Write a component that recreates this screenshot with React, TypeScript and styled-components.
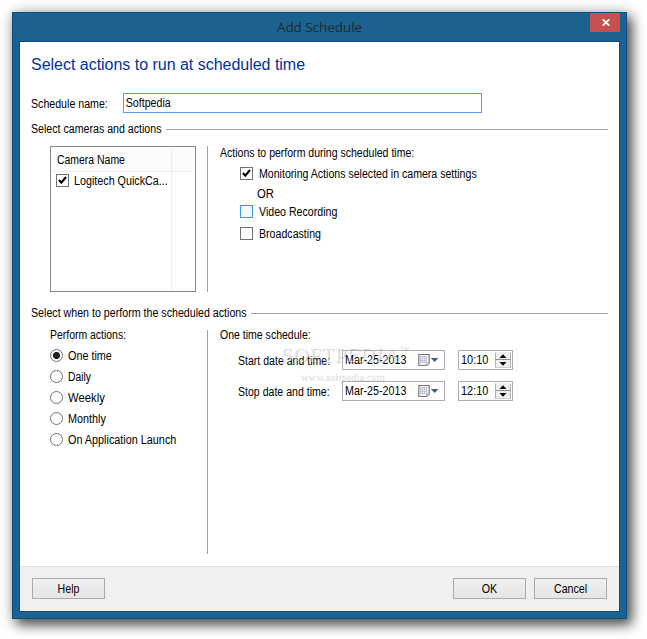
import React from "react";
import styled, { createGlobalStyle } from "styled-components";

const Global = createGlobalStyle`
  * { box-sizing: border-box; }
  body { margin: 0; background: #fff; font-family: "Liberation Sans", Arial, sans-serif; overflow: hidden; }
`;

const Page = styled.div`
  width: 647px;
  height: 639px;
  padding: 12px;
  background: #fff;
`;

const Window = styled.div`
  width: 615px;
  height: 607px;
  padding: 0 6px 7px;
  border: 1px solid #124d74;
  background: #1b6291;
  box-shadow: 5px 6px 11px rgba(0, 0, 0, 0.55), 2px 2px 14px rgba(0, 0, 0, 0.38);
`;

const TitleBar = styled.header`
  display: flex;
  height: 28px;
  align-items: flex-start;
  justify-content: flex-end;
`;

const Title = styled.h1`
  flex: 1;
  margin: 4px 0 0 30px;
  font: 400 13.5px/20px "Open Sans", "Noto Sans", sans-serif;
  letter-spacing: -0.05px;
  text-align: center;
  color: #202a30;
`;

const CloseButton = styled.button`
  display: flex;
  width: 30px;
  height: 19px;
  padding: 0 0 0 2px;
  border: 0;
  align-items: center;
  justify-content: center;
  background: #c75050;
`;

const Client = styled.main`
  display: flex;
  width: 601px;
  height: 571px;
  border: 1px solid #124d74;
  flex-direction: column;
  background: #fff;
`;

const Content = styled.div`
  position: relative;
  height: 524px;
  padding: 13px 11px 0;
`;

const Heading = styled.h2`
  margin: 0;
  font-size: 16px;
  line-height: 20px;
  font-weight: 400;
  letter-spacing: -0.02px;
  color: #003399;
`;

/* Narrow dialog lettering: full height, horizontally condensed. */
const Text = styled.span<{ $fit?: number; $center?: boolean }>`
  display: block;
  font-size: 12px;
  line-height: 14px;
  white-space: nowrap;
  color: #000;
  transform: scaleX(${(p) => p.$fit ?? 0.885});
  transform-origin: ${(p) => (p.$center ? "center" : "left")};
`;

const NameRow = styled.label`
  display: flex;
  height: 20px;
  margin-top: 18px;
  align-items: center;
  ${Text} { width: 92px; padding-top: 2px; }
`;

const NameField = styled.div`
  width: 359px;
  height: 20px;
  border: 1px solid #569de5;
  overflow: hidden;
`;

const NameInput = styled.input`
  display: block;
  width: 400px;
  height: 18px;
  padding: 0 2px;
  border: 0;
  outline: 0;
  background: transparent;
  font: 12px/14px "Liberation Sans", Arial, sans-serif;
  color: #000;
  transform: scaleX(0.885);
  transform-origin: left;
`;

const GroupTitle = styled.div<{ $top: number; $label: number }>`
  display: grid;
  grid-template-columns: ${(p) => p.$label}px 1fr;
  width: 577px;
  height: 14px;
  margin-top: ${(p) => p.$top}px;
  align-items: center;
  &::after { content: ""; height: 1px; margin-top: 1px; background: #a0a0a0; }
`;

const Group = styled.div<{ $top: number; $height: number }>`
  display: grid;
  grid-template-columns: 157px 1fr;
  height: ${(p) => p.$height}px;
  margin: ${(p) => p.$top}px 0 0 19px;
`;

const RightPane = styled.div`
  padding-left: 12px;
  border-left: 1px solid #a0a0a0;
`;

const GroupCaption = styled(Text)`
  margin-top: -2px;
`;

const CameraList = styled.div`
  display: grid;
  grid-template-columns: 120px 1fr;
  grid-template-rows: 24px 1fr;
  width: 146px;
  height: 146px;
  padding: 1px;
  border: 1px solid #828790;
`;

const HeaderCell = styled.div`
  padding: 5px 0 0 5px;
  border-right: 1px solid #e8eff8;
  border-bottom: 1px solid #e8eff8;
  background: #fcfcfc;
  &:nth-child(2) { border-right: 0; }
`;

const ListCell = styled.div`
  padding: 2px 0 0 4px;
  border-right: 1px solid #e8eff8;
  &:last-child { border-right: 0; }
`;

const Option = styled.label<{ $top?: number; $gap?: number }>`
  display: flex;
  height: 13px;
  margin-top: ${(p) => p.$top ?? 0}px;
  align-items: center;
  gap: ${(p) => p.$gap ?? 5}px;
`;

const Box = styled.span<{ $hot?: boolean }>`
  display: block;
  width: 13px;
  height: 13px;
  flex: none;
  border: 1px solid ${(p) => (p.$hot ? "#3399ff" : "#707070")};
  background: ${(p) => (p.$hot ? "#f3f9ff" : "#fff")};
  svg { display: block; }
`;

const Dot = styled.span<{ $on?: boolean }>`
  display: block;
  width: 13px;
  height: 13px;
  flex: none;
  border: 1px solid #707070;
  border-radius: 50%;
  background: ${(p) => (p.$on ? "radial-gradient(circle, #222 3.2px, #fff 3.9px)" : "#fff")};
`;

const Actions = styled.div`
  padding-left: 20px;
`;

const OrLabel = styled(Text)`
  margin: 7px 0 0 17px;
`;

const ScheduleRow = styled.div<{ $top: number }>`
  display: grid;
  grid-template-columns: 104px 103px 55px;
  height: 20px;
  margin: ${(p) => p.$top}px 0 0 18px;
  align-items: center;
  > :last-child { margin-left: 13px; }
  > ${Text} { padding-top: 2px; }
`;

const Field = styled.div<{ $width: number; $end?: number }>`
  display: flex;
  width: ${(p) => p.$width}px;
  height: 20px;
  padding: 1px ${(p) => p.$end ?? 1}px 1px 2px;
  border: 1px solid #abadb3;
  align-items: center;
  justify-content: space-between;
  background: #fff;
  ${Text} { width: 0; }
`;

const Spinner = styled.div`
  display: grid;
  width: 16px;
  height: 16px;
  grid-template-rows: 8px 8px;
`;

const SpinButton = styled.button`
  display: flex;
  padding: 0;
  border: 1px solid #b3b3b3;
  align-items: center;
  justify-content: center;
  background: #efefef;
  svg { display: block; flex: none; }
  &:first-child { border-top-color: #efefef; border-bottom-color: #8f8f8f; }
  &:last-child { border-top-width: 0; border-bottom-color: #d0d0d0; }
`;

const Watermark = styled.div`
  position: absolute;
  left: 261px;
  top: 302px;
  width: 132px;
  color: rgba(255, 255, 255, 0.5);
  font-family: "Liberation Serif", serif;
  text-shadow: 1px 1px 1px rgba(0, 0, 0, 0.2);
  pointer-events: none;
`;

const Brand = styled.div`
  display: flex;
  font-size: 21px;
  line-height: 23px;
  letter-spacing: 0.55px;
  sup { font: 6px/8px "Liberation Sans", sans-serif; }
`;

const Site = styled.div`
  margin: 3px 0 0 19px;
  font-size: 10.5px;
  line-height: 13px;
`;

const Footer = styled.footer`
  display: flex;
  flex: 1;
  padding: 11px 12px 0;
  border-top: 1px solid #dfdfdf;
  background: #f0f0f0;
  gap: 8px;
`;

const Button = styled.button<{ $push?: boolean }>`
  width: 73px;
  height: 21px;
  margin-left: ${(p) => (p.$push ? "auto" : 0)};
  padding: 1px 0 0;
  border: 1px solid #acacac;
  background: linear-gradient(#f0f0f0, #e5e5e5);
  font: 12px/14px "Liberation Sans", Arial, sans-serif;
`;

const CheckBox = ({ checked, hot }: { checked?: boolean; hot?: boolean }) => (
  <Box $hot={hot}>
    {checked && (
      <svg width="11" height="11" viewBox="0 0 11 11">
        <path d="M2 5 4.3 7.7 9 2" fill="none" stroke="#000" strokeWidth="2.1" />
      </svg>
    )}
  </Box>
);

const Calendar = () => (
  <svg width="24" height="14" viewBox="0 0 24 14">
    <path d="M.8 1.5h10.4v8.7l-2.4 2.3h-8z" fill="#f5f6f9" stroke="#80797b" strokeWidth="1.2" />
    <path d="M8.6 12.3V10h2.4" fill="#fff" stroke="#a5a1a3" strokeWidth=".8" />
    <path d="M2 3h7v7H2z" fill="#bfc6d8" />
    <path d="M3 4h1v1H3zM5 4h1v1H5zM7 4h1v1H7zM3 6h1v1H3zM5 6h1v1H5zM7 6h1v1H7zM3 8h1v1H3zM5 8h1v1H5zM7 8h1v1H7z" fill="#fff" />
    <path d="M12.8 5h7.6l-3.8 4z" fill="#44598b" />
  </svg>
);

const Spin = () => (
  <Spinner>
    <SpinButton aria-label="Increase">
      <svg width="8" height="4" viewBox="0 0 8 4"><path d="M.5 4 4 .3 7.5 4z" /></svg>
    </SpinButton>
    <SpinButton aria-label="Decrease">
      <svg width="8" height="4" viewBox="0 0 8 4"><path d="M.5 0h7L4 3.7z" /></svg>
    </SpinButton>
  </Spinner>
);

const repeats = [
  { label: "One time", fit: 0.9 },
  { label: "Daily", fit: 0.86 },
  { label: "Weekly", fit: 0.94 },
  { label: "Monthly", fit: 0.9 },
  { label: "On Application Launch", fit: 0.902 },
];

const times = [
  { label: "Start date and time:", time: "10:10", top: 8 },
  { label: "Stop date and time:", time: "12:10", top: 11 },
];

export default function App() {
  return (
    <Page>
      <Global />
      <Window>
        <TitleBar>
          <Title>Add Schedule</Title>
          <CloseButton aria-label="Close">
            <svg width="8" height="7" viewBox="0 0 8 7">
              <path d="M.7.3 7.3 6.7M7.3.3.7 6.7" stroke="#fff" strokeWidth="1.8" />
            </svg>
          </CloseButton>
        </TitleBar>
        <Client>
          <Content>
            <Heading>Select actions to run at scheduled time</Heading>
            <NameRow>
              <Text>Schedule name:</Text>
              <NameField><NameInput defaultValue="Softpedia" /></NameField>
            </NameRow>
            <GroupTitle $top={9} $label={135}>
              <Text>Select cameras and actions</Text>
            </GroupTitle>
            <Group $top={10} $height={146}>
              <CameraList>
                <HeaderCell><Text $fit={0.87}>Camera Name</Text></HeaderCell>
                <HeaderCell />
                <ListCell>
                  <Option>
                    <CheckBox checked />
                    <Text $fit={0.895}>Logitech QuickCa...</Text>
                  </Option>
                </ListCell>
                <ListCell />
              </CameraList>
              <RightPane>
                <Text $fit={0.877}>Actions to perform during scheduled time:</Text>
                <Actions>
                  <Option $top={7} $gap={6}><CheckBox checked /><Text $fit={0.882}>Monitoring Actions selected in camera settings</Text></Option>
                  <OrLabel $fit={0.94}>OR</OrLabel>
                  <Option $top={4} $gap={6}><CheckBox hot /><Text>Video Recording</Text></Option>
                  <Option $top={9} $gap={6}><CheckBox /><Text>Broadcasting</Text></Option>
                </Actions>
              </RightPane>
            </Group>
            <GroupTitle $top={14} $label={220}>
              <Text $fit={0.888}>Select when to perform the scheduled actions</Text>
            </GroupTitle>
            <Group $top={10} $height={224}>
              <div>
                <GroupCaption $fit={0.87}>Perform actions:</GroupCaption>
                {repeats.map((r, i) => (
                  <Option key={r.label} $top={i ? 8 : 7}>
                    <Dot $on={i === 0} />
                    <Text $fit={r.fit}>{r.label}</Text>
                  </Option>
                ))}
              </div>
              <RightPane>
                <GroupCaption $fit={0.877}>One time schedule:</GroupCaption>
                {times.map((t) => (
                  <ScheduleRow key={t.label} $top={t.top}>
                    <Text $fit={0.88}>{t.label}</Text>
                    <Field $width={103} $end={2}><Text $fit={0.893}>Mar-25-2013</Text><Calendar /></Field>
                    <Field $width={55}><Text $fit={0.91}>{t.time}</Text><Spin /></Field>
                  </ScheduleRow>
                ))}
              </RightPane>
            </Group>
            <Watermark>
              <Brand>SOFTPEDIA<sup>TM</sup></Brand>
              <Site>www.softpedia.com</Site>
            </Watermark>
          </Content>
          <Footer>
            <Button><Text $center>Help</Text></Button>
            <Button $push><Text $center>OK</Text></Button>
            <Button><Text $center>Cancel</Text></Button>
          </Footer>
        </Client>
      </Window>
    </Page>
  );
}
